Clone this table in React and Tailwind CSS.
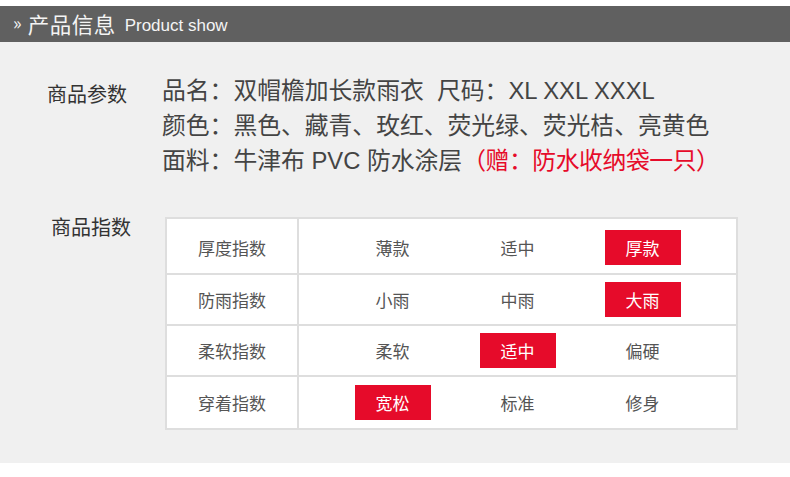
import React from 'react';

const cjk = { fontFamily: '"Noto Sans CJK SC", "Noto Sans", sans-serif' };
const mixed = { fontFamily: '"Liberation Sans", "Noto Sans CJK SC", sans-serif' };

const rows = [
    { label: '厚度指数', options: ['薄款', '适中', '厚款'], active: 2, h: 'h-[54px]', pad: 'pt-[3px]' },
    { label: '防雨指数', options: ['小雨', '中雨', '大雨'], active: 2, h: 'h-[51px]', pad: '' },
    { label: '柔软指数', options: ['柔软', '适中', '偏硬'], active: 1, h: 'h-[51px]', pad: '' },
    { label: '穿着指数', options: ['宽松', '标准', '修身'], active: 0, h: 'h-[53px]', pad: '' },
];

const App = () => {
    return (
        <div className="w-[790px] h-[477px] bg-white pt-[6px]" style={cjk}>
            {/* header bar */}
            <div className="h-[36px] bg-[#606060] flex items-center pl-[13px] text-[#f4f4f4]">
                <span className="text-[18px] leading-none mr-[6px] -mt-[4px]">»</span>
                <span className="text-[21.5px] leading-none tracking-[0.5px]">产品信息</span>
                <span
                    className="text-[17px] leading-none ml-[9px] mt-[2px]"
                    style={{ fontFamily: '"Liberation Sans", Arial, sans-serif' }}
                >
                    Product show
                </span>
            </div>

            <div className="h-[421px] bg-[#f0f0f0] pt-[31px]">
                {/* params */}
                <div className="flex text-[#444]">
                    <div className="w-[162px] pl-[47px] pt-[3px] text-[20px] leading-[35px] text-[#333]">商品参数</div>
                    <div className="text-[23.8px] leading-[35px]" style={mixed}>
                        <div className="whitespace-pre">品名：双帽檐加长款雨衣  尺码：XL XXL XXXL</div>
                        <div>颜色：黑色、藏青、玫红、荧光绿、荧光桔、亮黄色</div>
                        <div>
                            面料：牛津布 PVC 防水涂层<span className="text-[#e60b2a] tracking-[-0.4px]">（赠：防水收纳袋一只）</span>
                        </div>
                    </div>
                </div>

                {/* index table */}
                <div className="flex mt-[39px]">
                    <div className="w-[165px] pl-[51px] text-[20px] leading-[20px] text-[#333]">商品指数</div>
                    <div className="w-[573px] bg-white border-2 border-[#dedede] text-[17px] text-[#555]">
                        {rows.map((row, i) => (
                            <div
                                key={row.label}
                                className={`flex ${row.h} ${i > 0 ? 'border-t-2 border-[#dedede]' : ''}`}
                            >
                                <div className={`w-[132px] border-r-2 border-[#dedede] flex items-center justify-center ${row.pad}`}>
                                    {row.label}
                                </div>
                                <div className={`flex-1 flex items-center justify-center ${row.pad}`}>
                                    {row.options.map((opt, j) => (
                                        <div key={opt} className="w-[125px] flex justify-center">
                                            {j === row.active ? (
                                                <span className="w-[76px] h-[35px] bg-[#e60b2a] text-white flex items-center justify-center">
                                                    {opt}
                                                </span>
                                            ) : (
                                                <span>{opt}</span>
                                            )}
                                        </div>
                                    ))}
                                </div>
                            </div>
                        ))}
                    </div>
                </div>
            </div>
        </div>
    );
};

export default App;
